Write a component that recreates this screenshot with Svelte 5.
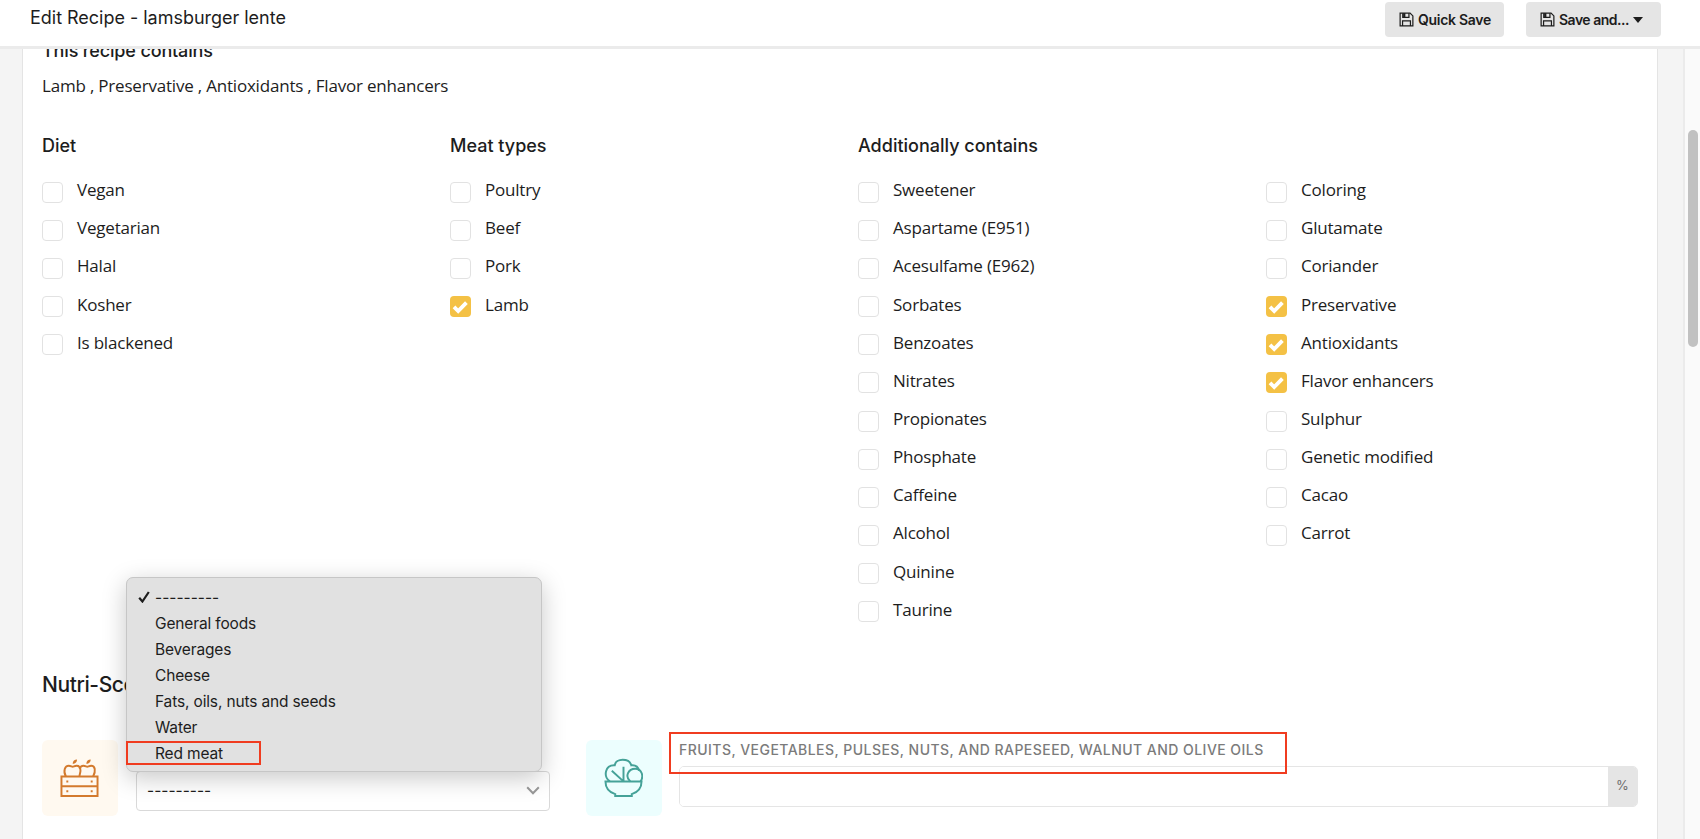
<script lang="ts">
    const contains = ["Lamb", "Preservative", "Antioxidants", "Flavor enhancers"];

    const columns = [
        {
            title: "Diet",
            items: ["Vegan", "Vegetarian", "Halal", "Kosher", "Is blackened"],
        },
        {
            title: "Meat types",
            items: ["Poultry", "Beef", "Pork", "Lamb"],
        },
        {
            title: "Additionally contains",
            items: [
                "Sweetener",
                "Aspartame (E951)",
                "Acesulfame (E962)",
                "Sorbates",
                "Benzoates",
                "Nitrates",
                "Propionates",
                "Phosphate",
                "Caffeine",
                "Alcohol",
                "Quinine",
                "Taurine",
            ],
        },
        {
            title: "",
            items: [
                "Coloring",
                "Glutamate",
                "Coriander",
                "Preservative",
                "Antioxidants",
                "Flavor enhancers",
                "Sulphur",
                "Genetic modified",
                "Cacao",
                "Carrot",
            ],
        },
    ];

    const categories = [
        "---------",
        "General foods",
        "Beverages",
        "Cheese",
        "Fats, oils, nuts and seeds",
        "Water",
        "Red meat",
    ];

    let checked = $state([...contains]);
    let category = $state("---------");

    function toggle(item: string) {
        checked = checked.includes(item)
            ? checked.filter((c) => c !== item)
            : [...checked, item];
    }
</script>

{#snippet floppy()}
    <svg class="floppy" viewBox="0 0 16 16" fill="none" stroke="currentColor">
        <path d="M1.2 1.2h10.6l3 3v10.6H1.2z" stroke-width="1.3" />
        <path d="M4 1.2v4.6h6.6V1.2M3.8 14.8V9.4h8.4v5.4" stroke-width="1.3" />
        <path d="M5.6 1.2v4.4" stroke-width="2.4" />
    </svg>
{/snippet}

<div class="page">
    <header>
        <h1>Edit Recipe - lamsburger lente</h1>
        <div class="actions">
            <button>{@render floppy()}<span>Quick Save</span></button>
            <button class="more">
                {@render floppy()}<span>Save and...</span>
                <i class="caret"></i>
            </button>
        </div>
    </header>

    <main>
        <div class="card">
            <h2>This recipe contains</h2>
            <p class="summary">{contains.join(" , ")}</p>

            <div class="columns">
                {#each columns as column}
                    <section>
                        <h2>{column.title}</h2>
                        {#each column.items as item}
                            <button
                                class="option"
                                role="checkbox"
                                aria-checked={checked.includes(item)}
                                onclick={() => toggle(item)}
                            >
                                <span class="box" class:on={checked.includes(item)}>
                                    {#if checked.includes(item)}
                                        <svg viewBox="0 0 21 21">
                                            <path d="M4 10.800l4.200 4.200 8.200-8.400" />
                                        </svg>
                                    {/if}
                                </span>
                                <span class="name">{item}</span>
                            </button>
                        {/each}
                    </section>
                {/each}
            </div>

            <h3>Nutri-Score</h3>

            <div class="nutri">
                <div class="tile orange">
                    <svg viewBox="0 0 40 40" fill="none" stroke="currentColor" stroke-width="2">
                        <path d="M1.500 19h37v10h-37zM1.500 29h37v10h-37z" />
                        <path d="M6 19C3 13 5 8 9 8c2 0 3 1 4 1s2-1 4-1c3 0 4 2 4 5 0 2-1 4-1 6" />
                        <path d="M20 11c1-2 2-3 4-3s3 1 4 1 2-1 4-1c4 0 5 5 2 11" />
                        <path
                            d="M13 6c0-3 2-4.500 4.500-4.500C17.500 4 16 6 13 6zM27 6c0-3 2-4.500 4.500-4.500C31.500 4 30 6 27 6z"
                            fill="currentColor"
                            stroke="none"
                        />
                        <path d="M6.500 24h2M31.500 24h2M6.500 34h2M31.500 34h2" />
                    </svg>
                </div>

                <div class="category">
                    <div class="select">
                        <span>{category}</span>
                        <svg class="chevron" viewBox="0 0 14 9">
                            <path d="M1.200 1.200L7 7.200l5.800-6" />
                        </svg>
                    </div>
                    <ul class="menu">
                        {#each categories as name}
                            <li class:marked={name === "Red meat"}>
                                <span class="tick">
                                    {#if name === category}
                                        <svg viewBox="0 0 12 12">
                                            <path d="M1.200 6.800l3.200 3.700L10.800 1" />
                                        </svg>
                                    {/if}
                                </span>
                                {name}
                            </li>
                        {/each}
                    </ul>
                </div>

                <div class="tile teal">
                    <svg viewBox="0 0 40 40" fill="none" stroke="currentColor" stroke-width="2">
                        <path d="M1.500 24h37c0 7-4 11-10 13v2h-17v-2c-6-2-10-6-10-13z" />
                        <path d="M6 24C-1 19 1 7 11 7.500 12 0 26 0 28 7.500c4-.5 7 1.500 8 5.500" />
                        <path d="M27 24c-6-5-2-13 5-13s9 8 5.500 13M20 24V9M20 24L8 13" />
                    </svg>
                </div>

                <div class="field">
                    <label for="fruits">
                        Fruits, vegetables, pulses, nuts, and rapeseed, walnut and olive oils
                    </label>
                    <div class="group">
                        <input id="fruits" type="text" />
                        <span class="unit">%</span>
                    </div>
                    <div class="highlight"></div>
                </div>
            </div>
        </div>
        <div class="scrollbar">
            <div class="thumb"></div>
        </div>
    </main>
</div>

<style>
    :global(body) {
        margin: 0;
    }

    .page {
        width: 1700px;
        height: 839px;
        display: flex;
        flex-direction: column;
        overflow: hidden;
        color: #1d1d1d;
        background-color: #fff;
        font-family: Inter, sans-serif;
    }

    h1,
    h2,
    h3,
    p,
    ul {
        margin: 0;
        padding: 0;
    }

    header {
        flex: none;
        box-sizing: border-box;
        height: 49px;
        display: flex;
        justify-content: space-between;
        align-items: flex-start;
        padding: 2px 39px 0 30px;
        border-bottom: 3px solid #ebebeb;
        background-color: #fff;
        position: relative;
        z-index: 1;
    }

    h1 {
        font-size: 18px;
        font-weight: 400;
        line-height: 32px;
        letter-spacing: -0.020px;
    }

    .actions {
        display: flex;
        gap: 22px;
    }

    button {
        border: none;
        color: inherit;
        font-family: inherit;
    }

    .actions button {
        display: flex;
        align-items: center;
        gap: 4px;
        width: 119px;
        height: 35px;
        padding: 0 14px;
        border-radius: 4px;
        background-color: #e5e5e5;
        font-size: 14px;
        font-weight: 600;
        white-space: nowrap;
        letter-spacing: -0.3px;
    }
    .actions .more {
        width: 135px;
        letter-spacing: -0.5px;
    }

    .floppy {
        flex: none;
        width: 15px;
        height: 15px;
    }

    .caret {
        border: 5px solid transparent;
        border-top: 6px solid #1d1d1d;
        border-bottom: none;
    }

    main {
        flex: 1;
        min-height: 0;
        display: flex;
        justify-content: space-between;
        padding-left: 22px;
        background-color: #f4f4f4;
    }

    .card {
        box-sizing: border-box;
        width: 1636px;
        padding: 0 19px;
        border: 1px solid #e4e4e4;
        border-width: 0 1px;
        background-color: #fff;
    }

    h2 {
        height: 24px;
        font-size: 18px;
        font-weight: 500;
        line-height: 25px;
    }

    .card > h2 {
        margin-top: -10px;
        line-height: 24px;
        letter-spacing: -0.15px;
    }

    .summary,
    .name {
        font-family: "Open Sans", sans-serif;
        font-size: 17px;
        line-height: 24px;
        letter-spacing: -0.2px;
    }

    .summary {
        margin-top: 11px;
    }

    .columns {
        display: grid;
        grid-template-columns: repeat(4, 408px);
        height: 497px;
        margin-top: 35px;
    }

    section h2 {
        margin-bottom: 15px;
    }

    .option {
        display: flex;
        align-items: center;
        gap: 14px;
        height: 38.170px;
        padding: 0;
        background: none;
    }

    .box {
        box-sizing: border-box;
        width: 21px;
        height: 21px;
        margin-top: 2px;
        border: 1px solid #e2e2e2;
        border-radius: 4px;
    }
    .box.on {
        border: none;
        background-color: #f4c145;
    }
    .box svg {
        display: block;
        fill: none;
        stroke: #fff;
        stroke-width: 3.800;
    }

    .name {
        margin-bottom: 2px;
    }

    h3 {
        margin-top: 41px;
        font-size: 21px;
        font-weight: 500;
        line-height: 28px;
        letter-spacing: -0.4px;
    }

    .nutri {
        display: flex;
        align-items: flex-start;
        margin-top: 41px;
    }

    .tile {
        width: 76px;
        height: 76px;
        display: flex;
        align-items: center;
        justify-content: center;
        border-radius: 6px;
    }
    .tile svg {
        width: 39px;
        height: 39px;
        margin: 0 1px 1px 0;
    }
    .orange {
        color: #d37a2d;
        background-color: #fff9f0;
    }
    .teal {
        color: #45a298;
        background-color: #ecfefe;
    }

    .category {
        position: relative;
        width: 414px;
        margin: 31px 36px 0 18px;
    }

    .select {
        box-sizing: border-box;
        height: 40px;
        display: flex;
        align-items: center;
        justify-content: space-between;
        padding: 0 9px 1px 10px;
        border: 1px solid #d9d9d9;
        border-radius: 4px;
        font-size: 15.500px;
    }

    .chevron {
        width: 14px;
        height: 9px;
        fill: none;
        stroke: #999;
        stroke-width: 2;
    }

    .menu {
        box-sizing: border-box;
        position: absolute;
        left: -10px;
        bottom: 39px;
        width: 416px;
        height: 195px;
        padding: 6px 0;
        list-style: none;
        border: 1px solid #c6c6c6;
        border-radius: 7px;
        background-color: #e1e1e1;
        box-shadow: 0 6px 24px rgba(0, 0, 0, 0.22);
    }
    .menu li {
        display: flex;
        align-items: center;
        height: 26px;
        padding-left: 11px;
        font-size: 15.500px;
        letter-spacing: -0.150px;
        position: relative;
    }
    .menu li:first-child {
        letter-spacing: 0;
    }
    .menu .marked::after {
        content: "";
        box-sizing: border-box;
        position: absolute;
        left: -1px;
        top: 1px;
        width: 135px;
        height: 24px;
        border: 2px solid #f03c20;
    }

    .tick {
        display: flex;
        width: 17px;
    }
    .tick svg {
        width: 12px;
        height: 12px;
        fill: none;
        stroke: #1d1d1d;
        stroke-width: 2.200;
    }

    .field {
        flex: 1;
        margin-left: 17px;
        position: relative;
    }

    label {
        display: block;
        height: 26px;
        line-height: 19px;
        font-size: 14px;
        font-weight: 500;
        letter-spacing: 0.460px;
        text-transform: uppercase;
        white-space: nowrap;
        color: #7b7b7b;
    }

    .group {
        box-sizing: border-box;
        display: flex;
        height: 41px;
        border: 1px solid #e5e5e5;
        border-radius: 5px;
        overflow: hidden;
    }

    input {
        flex: 1;
        border: none;
        outline: none;
    }

    .unit {
        width: 29px;
        line-height: 37px;
        text-align: center;
        font-size: 13px;
        color: #6d6d6d;
        background-color: #e5e5e5;
    }

    .highlight {
        box-sizing: border-box;
        position: absolute;
        left: -10px;
        top: -8px;
        width: 618px;
        height: 42px;
        border: 2px solid #f03c20;
    }

    .scrollbar {
        box-sizing: border-box;
        width: 17px;
        padding: 81px 2px 0 3px;
        border-left: 2px solid #ebebeb;
        background-color: #fafafa;
    }

    .thumb {
        width: 10px;
        height: 217px;
        border-radius: 5px;
        background-color: #c1c1c1;
    }
</style>
